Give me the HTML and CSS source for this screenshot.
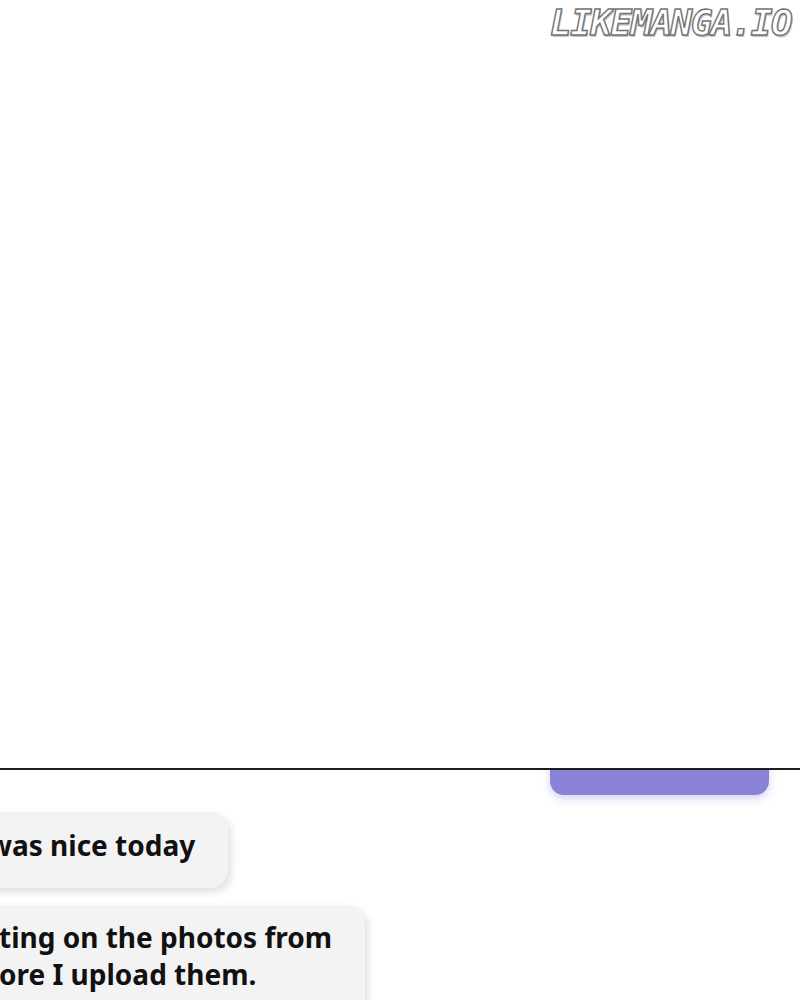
FILE: index.html
```html
<!DOCTYPE html>
<html lang="en">
<head>
    <meta charset="UTF-8">
    <meta name="viewport" content="width=device-width, initial-scale=1.0">
    <title>LikeManga</title>
    <link rel="stylesheet" href="styles.css">
</head>
<body>

<section class="panel-top">
    <div class="watermark">LIKEMANGA.IO</div>
</section>

<section class="panel-chat">
    <div class="send-row">
        <div class="send-btn"></div>
    </div>
    <div class="messages">
        <div class="bubble bubble-short">was nice today</div>
        <div class="bubble bubble-long">ting on the photos from<br>ore I upload them.</div>
    </div>
</section>

</body>
</html>
```

FILE: styles.css
```css
body {
    margin: 0;
    padding: 0;
    background: #fff;
    font-family: "Noto Sans", "Open Sans", sans-serif;
    overflow: hidden;
}
.panel-top {
    height: 770px;
    box-sizing: border-box;
    border-bottom: 2px solid #1e1e1e;
    display: flex;
    justify-content: flex-end;
    align-items: flex-start;
}
.watermark {
    font-family: "DejaVu Sans Mono", monospace;
    font-weight: bold;
    font-style: italic;
    font-size: 36px;
    line-height: 1;
    letter-spacing: -1.6px;
    color: #fff;
    -webkit-text-stroke: 1.4px #747474;
    text-shadow: 1px 2px 0 #c4c4c4;
    margin-top: 5px;
    margin-right: 9px;
}
.panel-chat {
    height: 230px;
    overflow: hidden;
}
.send-row {
    display: flex;
    justify-content: flex-end;
    padding: 0 31px 10px 0;
}
.send-btn {
    width: 219px;
    height: 60px;
    margin-top: -35px;
    background: #8983d8;
    border-radius: 14px;
    box-shadow: 0 4px 8px rgba(120, 110, 220, 0.3);
}
.messages {
    display: flex;
    flex-direction: column;
    align-items: flex-start;
    gap: 17px;
    margin-top: 7px;
    margin-left: -40px;
}
.bubble {
    background: #f3f3f3;
    color: #111;
    font-weight: bold;
    font-size: 28px;
    line-height: 37px;
    padding: 15px 33px 24px 34px;
    border-radius: 18px;
    box-shadow: 3px 4px 8px rgba(0, 0, 0, 0.13);
    white-space: nowrap;
}
.bubble-short {
    text-indent: -6px;
}
.bubble-long {
    padding-left: 39px;
    padding-top: 14px;
}
```
